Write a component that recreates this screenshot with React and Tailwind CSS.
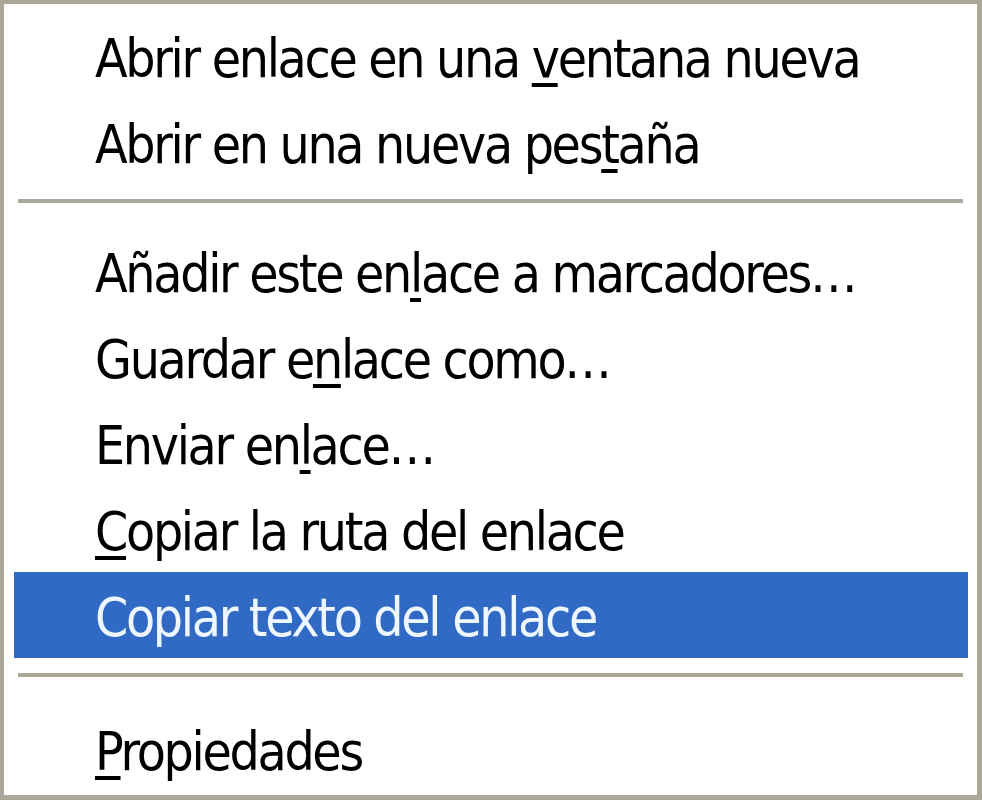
import React from 'react';

const items = [
  { type: 'item', parts: ['Abrir enlace en una ', 'v', 'entana nueva'] },
  { type: 'item', parts: ['Abrir en una nueva pes', 't', 'aña'] },
  { type: 'sep', h: 'h-[43px] pt-[14px]' },
  { type: 'item', parts: ['Añadir este en', 'l', 'ace a marcadores…'] },
  { type: 'item', parts: ['Guardar e', 'n', 'lace como…'] },
  { type: 'item', parts: ['Enviar en', 'l', 'ace…'] },
  { type: 'item', parts: ['', 'C', 'opiar la ruta del enlace'] },
  { type: 'item', parts: ['Copiar texto del enlace', '', ''], active: true },
  { type: 'sep', h: 'h-[48px] pt-[15px]' },
  { type: 'item', parts: ['', 'P', 'ropiedades'] },
];

const MenuItem = ({ parts, active }) => (
  <div
    className={`h-[86px] pl-[81px] pt-[3px] leading-[86px] whitespace-nowrap ${
      active ? 'bg-[#316ac5] text-[#eef6ff]' : 'text-black'
    }`}
  >
    {parts[0]}
    {parts[1] && (
      <span className="underline decoration-[4px] underline-offset-[6px]">{parts[1]}</span>
    )}
    {parts[2]}
  </div>
);

export default function App() {
  return (
    <div className="w-[982px] h-[800px] bg-white border-[#aca899] border-l-4 border-t-4 border-r-[5px] border-b-[5px] pt-[9px] pl-[10px] pr-[9px] font-['DejaVu_Sans_Condensed','DejaVu_Sans',sans-serif] text-[53px] tracking-[-2.3px] font-stretch-condensed overflow-hidden">
      {items.map((it, i) =>
        it.type === 'sep' ? (
          <div key={i} className={`${it.h} pl-[4px] pr-[5px]`}>
            <div className="h-[4px] bg-[#aca899]" />
          </div>
        ) : (
          <MenuItem key={i} parts={it.parts} active={it.active} />
        )
      )}
    </div>
  );
}
